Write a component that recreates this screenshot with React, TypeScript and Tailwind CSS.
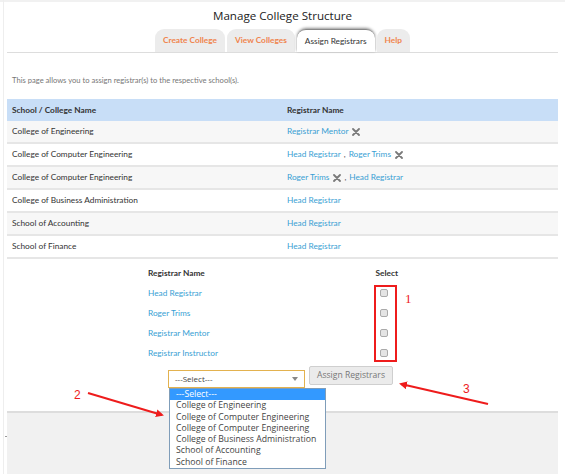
import React from 'react'

type Reg = { label: string; remove?: boolean }

const colleges: { name: string; regs: Reg[] }[] = [
  { name: 'College of Engineering', regs: [{ label: 'Registrar Mentor', remove: true }] },
  { name: 'College of Computer Engineering', regs: [{ label: 'Head Registrar' }, { label: 'Roger Trims', remove: true }] },
  { name: 'College of Computer Engineering', regs: [{ label: 'Roger Trims', remove: true }, { label: 'Head Registrar' }] },
  { name: 'College of Business Administration', regs: [{ label: 'Head Registrar' }] },
  { name: 'School of Accounting', regs: [{ label: 'Head Registrar' }] },
  { name: 'School of Finance', regs: [{ label: 'Head Registrar' }] },
]

const registrars = ['Head Registrar', 'Roger Trims', 'Registrar Mentor', 'Registrar Instructor']

const options = [
  'College of Engineering',
  'College of Computer Engineering',
  'College of Computer Engineering',
  'College of Business Administration',
  'School of Accounting',
  'School of Finance',
]

const RemoveX = () => (
  <svg width="8" height="8" viewBox="0 0 8 8" className="ml-[4px]">
    <path d="M1 1 L7 7 M7 1 L1 7" stroke="#7a7a7a" strokeWidth="1.8" strokeLinecap="round" />
  </svg>
)

const Tab = ({ label, active }: { label: string; active?: boolean }) => (
  <div
    className={
      active
        ? 'h-[23px] px-[8px] flex items-center rounded-t-[9px] bg-white text-[#333] font-normal shadow-[0_-1px_3px_rgba(0,0,0,0.45)] border-t border-[#888]'
        : 'h-[23px] px-[8px] flex items-center rounded-t-[9px] bg-[#ececec] text-[#f0844c] font-bold'
    }
  >
    {label}
  </div>
)

const Arrows = () => (
  <svg className="absolute inset-0 pointer-events-none" width="565" height="474" viewBox="0 0 565 474">
    <defs>
      <marker id="head" markerWidth="8" markerHeight="8" refX="6" refY="4" orient="auto" markerUnits="userSpaceOnUse">
        <path d="M0 0 L8 4 L0 8 Z" fill="#ee1c1c" />
      </marker>
    </defs>
    <line x1="88" y1="393" x2="162" y2="415" stroke="#ee1c1c" strokeWidth="2" markerEnd="url(#head)" />
    <line x1="488" y1="404" x2="401" y2="384" stroke="#ee1c1c" strokeWidth="2" markerEnd="url(#head)" />
  </svg>
)

export default function App() {
  return (
    <div className="relative w-[565px] h-[474px] overflow-hidden bg-white font-['Lato',sans-serif]">
      <div className="absolute left-[3px] top-0 bottom-0 w-px bg-[#eeeeee]" />
      <div className="flex flex-col">
        <div className="h-[8px] border-t-2 border-[#f1f1f1]" />
        <h1 className="text-center text-[11.6px] leading-[16px] text-[#222] font-['Open_Sans',sans-serif]">
          Manage College Structure
        </h1>
        <div className="mt-[5px] mx-[7px] flex justify-center gap-[2px] border-b border-[#dddddd] text-[8.3px]">
          <Tab label="Create College" />
          <Tab label="View Colleges" />
          <Tab label="Assign Registrars" active />
          <Tab label="Help" />
        </div>

        <p className="mt-[22px] ml-[12px] text-[7.6px] leading-[10px] text-[#777]">
          This page allows you to assign registrar(s) to the respective school(s).
        </p>

        <div className="mt-[14px] mx-[7px] text-[8.3px] text-[#333]">
          <div className="h-[22px] flex items-center bg-[#c8def7] font-bold text-[#333]">
            <div className="w-[280px] pl-[5px]">School / College Name</div>
            <div>Registrar Name</div>
          </div>
          {colleges.map((c, i) => (
            <div
              key={i}
              className={
                i % 2 === 0
                  ? 'h-[23px] flex items-center bg-[#f7f7f7] border-b-2 border-[#e6e6e6]'
                  : 'h-[23px] flex items-center bg-white border-b-2 border-[#e6e6e6]'
              }
            >
              <div className="w-[280px] pl-[5px]">{c.name}</div>
              <div className="flex items-center text-[#3a9fd4]">
                {c.regs.map((r, j) => (
                  <span key={j} className="flex items-center">
                    {j > 0 && <span className="mx-[3px] text-[#555]">,</span>}
                    {r.label}
                    {r.remove && <RemoveX />}
                  </span>
                ))}
              </div>
            </div>
          ))}
        </div>

        <div className="mt-[8px] ml-[148px] w-[252px] text-[8.3px]">
          <div className="h-[12px] flex items-center justify-between font-bold text-[#333]">
            <span>Registrar Name</span>
            <span className="mr-[2px]">Select</span>
          </div>
          <div className="mt-[4px] flex flex-col">
            {registrars.map((r) => (
              <div key={r} className="h-[20px] flex items-center justify-between">
                <span className="text-[#3a9fd4]">{r}</span>
                <span className="mr-[12px] w-[8px] h-[8px] rounded-[2px] border border-[#aaa] bg-[#e4e4e4]" />
              </div>
            ))}
          </div>
        </div>

        <div className="mt-[3px] ml-[168px] flex items-start gap-[4px] font-['Open_Sans',sans-serif]">
          <div className="mt-[4px] w-[137px] h-[18px] border border-[#e3b24f] bg-white flex items-center justify-between px-[6px] text-[8px] text-[#444]">
            <span>---Select---</span>
            <svg width="6" height="4" viewBox="0 0 6 4">
              <path d="M0 0 L6 0 L3 4 Z" fill="#888" />
            </svg>
          </div>
          <button className="h-[19px] px-[7px] bg-[#ebebeb] border border-[#cfcfcf] rounded-[2px] text-[8.6px] text-[#777]">
            Assign Registrars
          </button>
        </div>

        <div className="mt-[23px] mx-[7px] h-[80px] bg-[#f1f1f1] border-t-2 border-[#dddddd]" />
      </div>

      <div className="absolute left-[5px] top-[436px] w-[2px] h-px bg-[#999]" />

      <div className="absolute left-[169px] top-[388px] w-[157px] border border-[#7f9db9] bg-white font-['Open_Sans',sans-serif] text-[8.7px] text-[#444] leading-[11.3px]">
        <div className="bg-[#3399ff] text-white px-[6px]">---Select---</div>
        {options.map((o, i) => (
          <div key={i} className="px-[6px]">
            {o}
          </div>
        ))}
      </div>

      <div className="absolute left-[374px] top-[285px] w-[23px] h-[77px] border-2 border-[#ee1c1c]" />
      <span className="absolute left-[405px] top-[292px] text-[13px] leading-[14px] text-[#ee1c1c] font-['Liberation_Serif',serif]">1</span>
      <span className="absolute left-[74px] top-[388px] text-[12px] leading-[14px] text-[#ee1c1c] font-['Liberation_Sans',sans-serif]">2</span>
      <span className="absolute left-[463px] top-[382px] text-[12px] leading-[14px] text-[#ee1c1c] font-['Liberation_Sans',sans-serif]">3</span>
      <Arrows />
    </div>
  )
}
